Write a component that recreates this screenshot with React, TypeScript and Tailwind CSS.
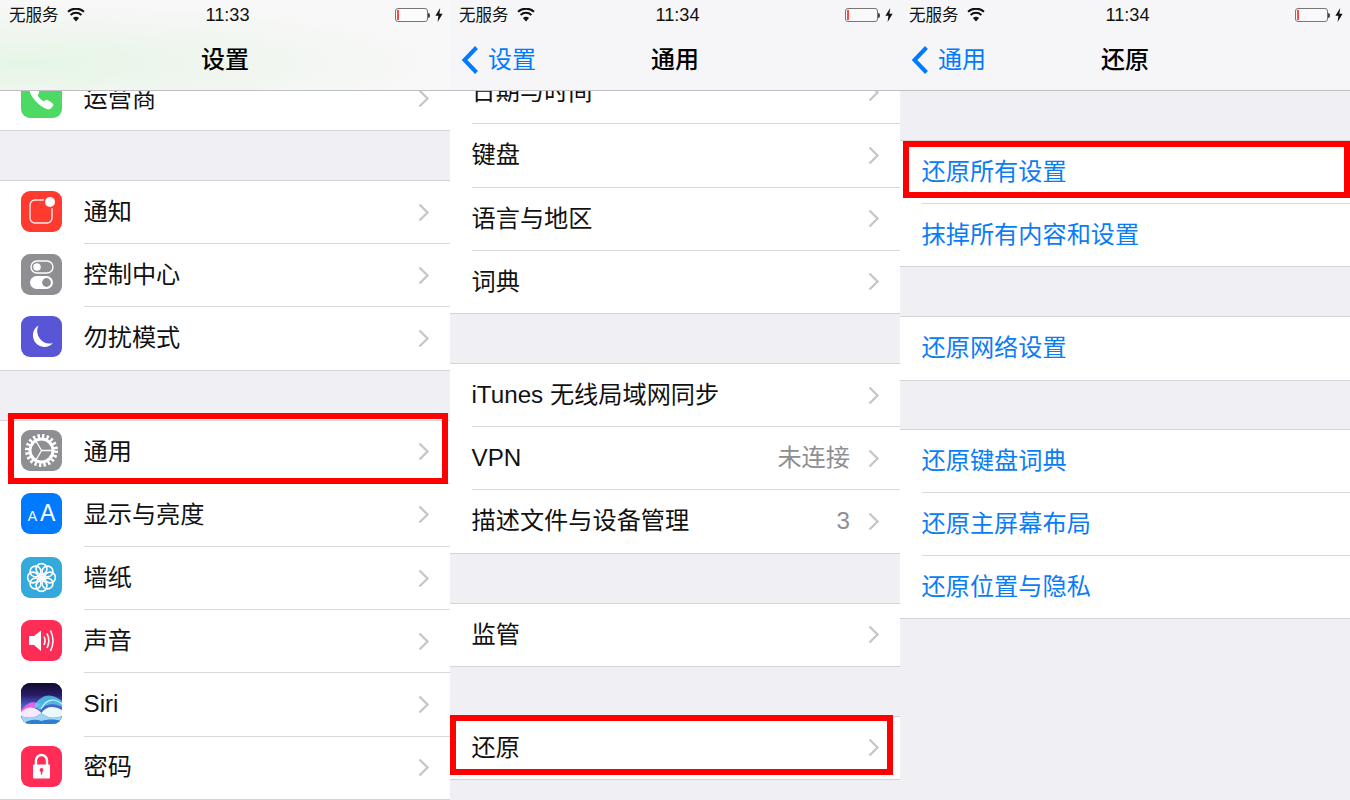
import { IoCall } from "react-icons/io5";

const FONT = "font-['Liberation_Sans','Noto_Sans_CJK_SC',sans-serif]";

function Chevron() {
  return (
    <svg width="12" height="19" viewBox="0 0 12 19" className="shrink-0">
      <polyline points="1.5,1.5 9.5,9.5 1.5,17.5" fill="none" stroke="#c7c7cc" strokeWidth="2.4" />
    </svg>
  );
}

function StatusBar({ time }: { time: string }) {
  return (
    <div className="grid grid-cols-3 items-center h-[30px] pl-[9px] pr-[7px] text-[#111]">
      <div className="flex items-center gap-[8px] text-[16.5px] leading-none">
        <span>无服务</span>
        <svg width="18" height="14" viewBox="0 0 18 14">
          <path d="M9 13.6 L5.9 9.9 A5 5 0 0 1 12.1 9.9 Z" fill="#111" />
          <path d="M3.6 6.9 A8.2 8.2 0 0 1 14.4 6.9" fill="none" stroke="#111" strokeWidth="2" />
          <path d="M1 3.7 A12 12 0 0 1 17 3.7" fill="none" stroke="#111" strokeWidth="2" />
        </svg>
      </div>
      <div className="text-center text-[18.2px] font-medium leading-none pl-[3px]">{time}</div>
      <div className="flex items-center justify-end gap-[5px]">
        <div className="flex items-center">
          <div className="w-[33px] h-[14px] rounded-[3px] border-[1.5px] border-[#777] p-[1px] bg-white/40">
            <div className="w-[2px] h-full bg-[#ff4b45]" />
          </div>
          <div className="w-[2.5px] h-[5px] bg-[#444] rounded-r-sm" />
        </div>
        <svg width="8" height="14" viewBox="0 0 8 14">
          <path d="M5.2 0 L0.4 7.8 H3.4 L2.6 14 L7.6 5.8 H4.4 Z" fill="#111" />
        </svg>
      </div>
    </div>
  );
}

function Header({ time, title, back, tinted }: { time: string; title: string; back?: string; tinted?: boolean }) {
  return (
    <header
      className={`relative z-10 h-[91px] border-b border-[#bfbfc3] ${
        tinted
          ? "bg-[radial-gradient(ellipse_at_6%_70%,#e5f6e5_0%,#f1f6f0_38%,#f8f8f8_72%)]"
          : "bg-[#f6f6f8]"
      }`}
    >
      <StatusBar time={time} />
      <div className="grid grid-cols-3 items-center h-[60px]">
        <div className="flex items-center gap-[9px] pl-[11px] text-[#007aff] text-[24px] leading-none">
          {back && (
            <>
              <svg width="18" height="30" viewBox="0 0 18 30">
                <polyline points="15.5,2.5 3.5,15 15.5,27.5" fill="none" stroke="#007aff" strokeWidth="4" />
              </svg>
              <span>{back}</span>
            </>
          )}
        </div>
        <div className="text-center text-[24px] font-medium leading-none text-black">{title}</div>
      </div>
    </header>
  );
}

function IconBox({ bg, children }: { bg: string; children: React.ReactNode }) {
  return (
    <div className={`w-[41px] h-[41px] rounded-[9px] flex items-center justify-center shrink-0 overflow-hidden ${bg}`}>
      {children}
    </div>
  );
}

const NotifyIcon = (
  <IconBox bg="bg-[#ff3b30]">
    <svg width="41" height="41" viewBox="0 0 41 41">
      <rect x="9" y="9" width="22" height="23" rx="5" fill="none" stroke="#fff" strokeWidth="1.4" opacity="0.9" />
      <circle cx="29" cy="11" r="6.6" fill="#ff3b30" />
      <circle cx="29" cy="11" r="5" fill="#fff" />
    </svg>
  </IconBox>
);

const ControlIcon = (
  <IconBox bg="bg-[#8e8e93]">
    <svg width="41" height="41" viewBox="0 0 41 41">
      <rect x="10" y="7" width="22" height="12" rx="6" fill="none" stroke="#fff" strokeWidth="1.4" />
      <circle cx="16" cy="13" r="3.8" fill="#fff" />
      <rect x="9" y="22" width="23" height="13" rx="6.5" fill="#fff" />
      <circle cx="25.5" cy="28.5" r="4.4" fill="#8e8e93" />
    </svg>
  </IconBox>
);

const MoonIcon = (
  <IconBox bg="bg-[#5856d6]">
    <svg width="41" height="41" viewBox="0 0 41 41">
      <path d="M17.5 9.5 A11.5 11.5 0 1 0 32 27 A12.5 12.5 0 0 1 17.5 9.5 Z" fill="#fff" />
    </svg>
  </IconBox>
);

const GearIcon = (
  <IconBox bg="bg-[#8e8e93]">
    <svg width="41" height="41" viewBox="0 0 41 41">
      <circle cx="20.5" cy="20.5" r="11.5" fill="none" stroke="#fff" strokeWidth="3" />
      <circle cx="20.5" cy="20.5" r="14.5" fill="none" stroke="#fff" strokeWidth="4" strokeDasharray="2.4 2.16" />
      <path d="M20.5 20.5 H32 M20.5 20.5 L14.7 30.5 M20.5 20.5 L14.7 10.5" stroke="#fff" strokeWidth="1.3" />
    </svg>
  </IconBox>
);

const DisplayIcon = (
  <IconBox bg="bg-[#007aff]">
    <span className="text-white font-['Liberation_Sans',sans-serif] leading-none flex items-baseline gap-[3px]">
      <span className="text-[14px]">A</span>
      <span className="text-[23px]">A</span>
    </span>
  </IconBox>
);

const FlowerIcon = (
  <IconBox bg="bg-[#34aadc]">
    <svg width="41" height="41" viewBox="0 0 41 41" fill="none" stroke="#fff" strokeWidth="1.6">
      {[0, 45, 90, 135, 180, 225, 270, 315].map((a) => (
        <circle key={a} cx="20.5" cy="12" r="5.4" transform={`rotate(${a} 20.5 20.5)`} />
      ))}
      <circle cx="20.5" cy="20.5" r="2.6" fill="#fff" stroke="none" />
    </svg>
  </IconBox>
);

const SoundIcon = (
  <IconBox bg="bg-[#ff2d55]">
    <svg width="41" height="41" viewBox="0 0 41 41">
      <path d="M8 16 H13 L20 10.5 V31 L13 25 H8 Z" fill="#fff" />
      <g fill="none" stroke="#fff" strokeWidth="1.6">
        <path d="M23 16.5 Q25 20.5 23 25" />
        <path d="M26 13.5 Q29.6 20.5 26 28" />
        <path d="M29.5 10.5 Q34.5 20.5 29.5 31" />
      </g>
    </svg>
  </IconBox>
);

const SiriIcon = (
  <IconBox bg="bg-[#1a1238]">
    <svg width="41" height="41" viewBox="0 0 41 41">
      <defs>
        <linearGradient id="siriBg" x1="0" y1="0" x2="0" y2="1">
          <stop offset="0" stopColor="#0f0c2a" />
          <stop offset="0.3" stopColor="#2a1c6a" />
          <stop offset="0.55" stopColor="#4a5fc8" />
          <stop offset="1" stopColor="#3a8ed8" />
        </linearGradient>
      </defs>
      <rect width="41" height="41" fill="url(#siriBg)" />
      <path d="M0 27 C7 19 13 17 19 22 C15 25 12 27 0 32 Z" fill="#e85fe0" />
      <path d="M13 23 C22 9 32 11 41 18 V24 C32 19 24 21 19 27 Z" fill="#55d8f5" opacity="0.75" />
      <path d="M20 26 C26 15 34 15 41 21" fill="none" stroke="#c8f6ff" strokeWidth="1.2" />
      <path d="M0 29 C8 22 15 24 20.5 30 C15 35 8 36 0 33 Z" fill="#f6e9ff" />
      <path d="M20.5 30 C26 22 33 23 41 27 V33 C33 36 26 35 20.5 30 Z" fill="#e9fbff" />
      <path d="M0 33 C8 36 15 35 20.5 30 C26 35 33 36 41 33 V41 H0 Z" fill="#9fd4f5" />
      <path d="M2 41 C8 36 15 36 20.5 38 C26 36 34 36 41 38 V41 Z" fill="#2f7fd0" />
    </svg>
  </IconBox>
);

const LockIcon = (
  <IconBox bg="bg-[#ff2d55]">
    <svg width="41" height="41" viewBox="0 0 41 41">
      <path d="M15 19 V14.5 A5.5 5.5 0 0 1 26 14.5 V19" fill="none" stroke="#fff" strokeWidth="2.4" />
      <rect x="12" y="18.5" width="17" height="14" rx="1" fill="#fff" />
      <circle cx="20.5" cy="24" r="1.9" fill="#ff2d55" />
      <rect x="19.8" y="24.5" width="1.4" height="4" fill="#ff2d55" />
    </svg>
  </IconBox>
);

const PhoneIcon = (
  <IconBox bg="bg-[#4cd964]">
    <IoCall className="text-white text-[27px]" />
  </IconBox>
);

type RowData = { label: string; icon?: React.ReactNode; value?: string; link?: boolean };

// last row carries the full-width bottom line of its group
function Row({ label, icon, value, link, last }: RowData & { last: boolean }) {
  return (
    <div className={`flex items-center h-[63.2px] bg-white ${last ? "border-b border-[#d4d4d8]" : ""}`}>
      {icon && <div className="pl-[21px] mb-[3px]">{icon}</div>}
      <div
        className={`flex-1 h-full flex items-center pr-[20px] ml-[21.5px] ${
          last ? "" : "border-b border-[#d9d9dc]"
        }`}
      >
        <span className={`flex-1 text-[24.2px] leading-none ${link ? "text-[#0a7df5]" : "text-[#111]"}`}>{label}</span>
        {value && <span className="text-[24.2px] leading-none text-[#8e8e93] mr-[18px]">{value}</span>}
        {!link && <Chevron />}
      </div>
    </div>
  );
}

function Group({ rows, top, className = "" }: { rows: RowData[]; top?: boolean; className?: string }) {
  return (
    <div className={`${top ? "border-t border-[#d4d4d8]" : ""} ${className}`}>
      {rows.map((r, i) => (
        <Row key={r.label} {...r} last={i === rows.length - 1} />
      ))}
    </div>
  );
}

function RedBox({ className }: { className: string }) {
  return <div className={`absolute z-20 border-[6px] border-[#ff0000] ${className}`} />;
}

export default function App() {
  return (
    <div className={`flex w-[1350px] h-[800px] overflow-hidden bg-[#efeff4] ${FONT}`}>
      {/* 设置 */}
      <div className="relative w-[450px] h-[800px] overflow-hidden">
        <Header time="11:33" title="设置" tinted />
        <div className="-mt-[23.2px]">
          <Group rows={[{ label: "运营商", icon: PhoneIcon }]} />
          <Group
            top
            className="mt-[49px]"
            rows={[
              { label: "通知", icon: NotifyIcon },
              { label: "控制中心", icon: ControlIcon },
              { label: "勿扰模式", icon: MoonIcon },
            ]}
          />
          <Group
            top
            className="mt-[49px]"
            rows={[
              { label: "通用", icon: GearIcon },
              { label: "显示与亮度", icon: DisplayIcon },
              { label: "墙纸", icon: FlowerIcon },
              { label: "声音", icon: SoundIcon },
              { label: "Siri", icon: SiriIcon },
              { label: "密码", icon: LockIcon },
            ]}
          />
        </div>
        <RedBox className="left-[8px] top-[413px] w-[440px] h-[71px]" />
      </div>

      {/* 通用 */}
      <div className="relative w-[450px] h-[800px] overflow-hidden">
        <Header time="11:34" title="通用" back="设置" />
        <div className="-mt-[29.8px]">
          <Group
            rows={[
              { label: "日期与时间" },
              { label: "键盘" },
              { label: "语言与地区" },
              { label: "词典" },
            ]}
          />
          <Group
            top
            className="mt-[49px]"
            rows={[
              { label: "iTunes 无线局域网同步" },
              { label: "VPN", value: "未连接" },
              { label: "描述文件与设备管理", value: "3" },
            ]}
          />
          <Group top className="mt-[49px]" rows={[{ label: "监管" }]} />
          <Group top className="mt-[49px]" rows={[{ label: "还原" }]} />
        </div>
        <RedBox className="left-0 top-[715px] w-[443px] h-[60px]" />
      </div>

      {/* 还原 */}
      <div className="relative w-[450px] h-[800px] overflow-hidden">
        <Header time="11:34" title="还原" back="通用" />
        <Group
          top
          className="mt-[49px]"
          rows={[
            { label: "还原所有设置", link: true },
            { label: "抹掉所有内容和设置", link: true },
          ]}
        />
        <Group top className="mt-[49px]" rows={[{ label: "还原网络设置", link: true }]} />
        <Group
          top
          className="mt-[48px]"
          rows={[
            { label: "还原键盘词典", link: true },
            { label: "还原主屏幕布局", link: true },
            { label: "还原位置与隐私", link: true },
          ]}
        />
        <RedBox className="left-[3px] top-[141px] w-[447px] h-[57px]" />
      </div>
    </div>
  );
}
